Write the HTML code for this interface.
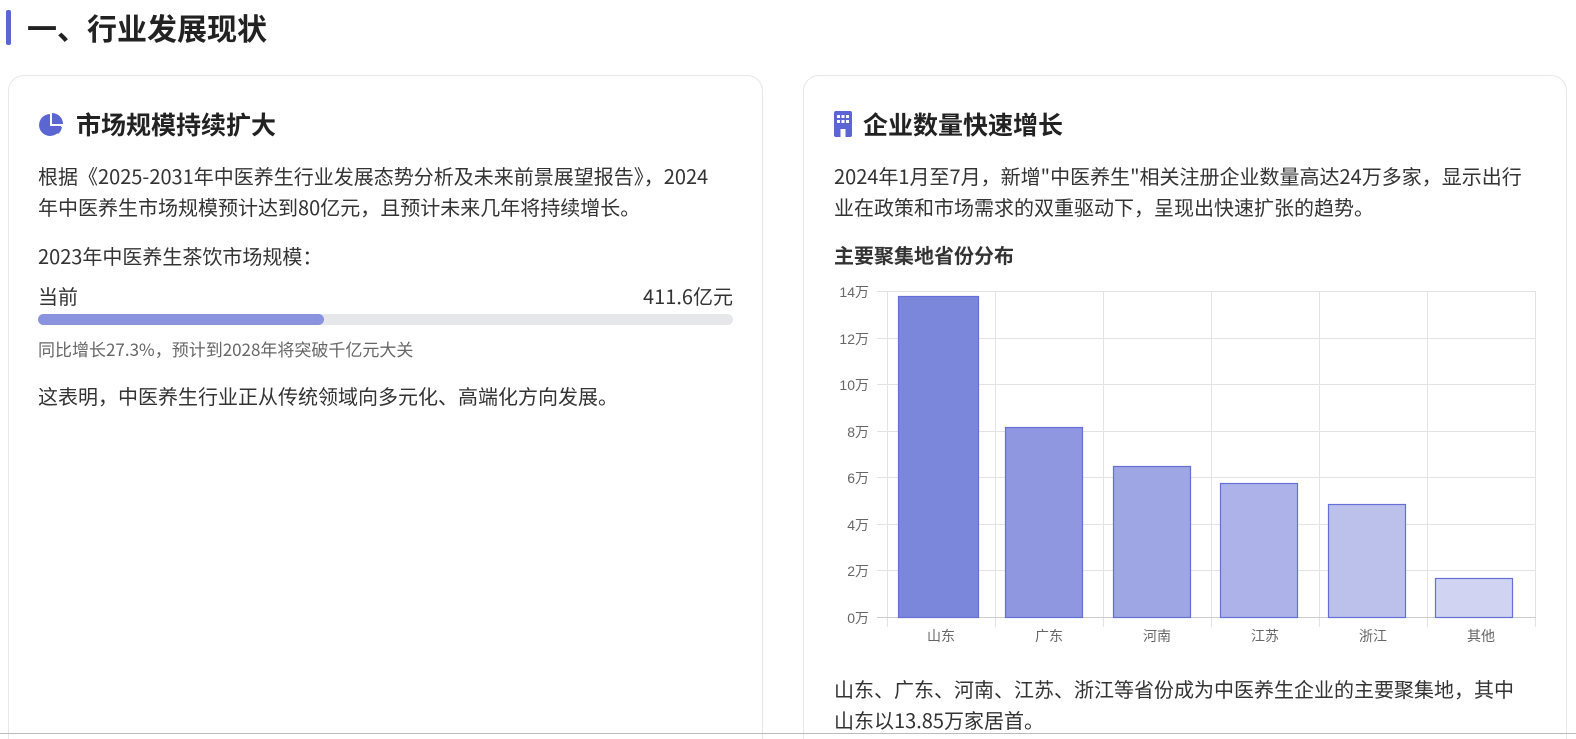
<!DOCTYPE html>
<html><head><meta charset="utf-8"><style>
*{margin:0;padding:0;box-sizing:border-box}
html,body{width:1576px;height:739px;overflow:hidden}
body{background:#fff;font-family:"Noto Sans CJK SC","Liberation Sans",sans-serif;color:#333;position:relative}
.a{position:absolute;white-space:nowrap}
.card{position:absolute;top:75px;height:700px;border:1px solid #e5e7eb;border-radius:16px;background:#fff}
.t{font-size:20px;line-height:31px;color:#333}
.h{font-size:25px;font-weight:bold;color:#222;line-height:32px}
.yl{position:absolute;font-size:14px;color:#666;text-align:right;width:40px;left:829px;font-family:"Liberation Sans","Noto Sans CJK SC",sans-serif}
.xl{position:absolute;font-size:14px;color:#666;text-align:center;width:108px;top:626px}
</style></head><body>
<div class="a" style="left:6px;top:10px;width:5px;height:35px;background:#5b66d3;border-radius:2px"></div>
<div class="a" style="left:27px;top:6px;font-size:30px;font-weight:bold;color:#222;line-height:42px">一、行业发展现状</div>
<div class="card" style="left:8px;width:755px"></div>
<div class="card" style="left:803px;width:764px"></div>
<svg class="a" style="left:38px;top:112px" width="26" height="26" viewBox="0 0 26 26"><path d="M12 2A11 11 0 1 0 23 14H12Z" fill="#5b66d3"/><path d="M14 1A11 11 0 0 1 25 12H14Z" fill="#5b66d3"/><path d="M14 15H24A11 11 0 0 1 20 22Z" fill="#5b66d3"/></svg>
<div class="a h" style="left:76px;top:108px">市场规模持续扩大</div>
<div class="a t" style="left:38px;top:160px">根据《2025-2031年中医养生行业发展态势分析及未来前景展望报告》，2024<br>年中医养生市场规模预计达到80亿元，且预计未来几年将持续增长。</div>
<div class="a t" style="left:38px;top:240px">2023年中医养生茶饮市场规模：</div>
<div class="a t" style="left:38px;top:280px">当前</div>
<div class="a t" style="left:560px;top:280px;width:173px;text-align:right">411.6亿元</div>
<div class="a" style="left:38px;top:314px;width:695px;height:11px;background:#e5e7eb;border-radius:6px"></div>
<div class="a" style="left:38px;top:314px;width:286px;height:11px;background:#8a93de;border-radius:6px"></div>
<div class="a" style="left:38px;top:337px;font-size:17px;color:#666;line-height:24px">同比增长27.3%，预计到2028年将突破千亿元大关</div>
<div class="a t" style="left:38px;top:380px">这表明，中医养生行业正从传统领域向多元化、高端化方向发展。</div>
<svg class="a" style="left:834px;top:111px" width="18" height="26" viewBox="0 0 18 26"><rect x="0" y="0" width="18" height="26" rx="2" fill="#5b66d3"/><g fill="#fff"><rect x="3" y="4" width="3" height="3"/><rect x="7.5" y="4" width="3" height="3"/><rect x="12" y="4" width="3" height="3"/><rect x="3" y="9" width="3" height="3"/><rect x="7.5" y="9" width="3" height="3"/><rect x="12" y="9" width="3" height="3"/><rect x="6.5" y="18" width="5" height="8"/></g></svg>
<div class="a h" style="left:863px;top:108px">企业数量快速增长</div>
<div class="a t" style="left:834px;top:160px">2024年1月至7月，新增"中医养生"相关注册企业数量高达24万多家，显示出行<br>业在政策和市场需求的双重驱动下，呈现出快速扩张的趋势。</div>
<div class="a" style="left:834px;top:240px;font-size:20px;font-weight:bold;color:#333;line-height:30px">主要聚集地省份分布</div>
<svg class="a" style="left:0;top:0" width="1576" height="739">
<g stroke="#e3e3e3" stroke-width="1">
<line x1="877" y1="291.5" x2="1536" y2="291.5"/><line x1="877" y1="338.5" x2="1536" y2="338.5"/><line x1="877" y1="384.5" x2="1536" y2="384.5"/><line x1="877" y1="431.5" x2="1536" y2="431.5"/><line x1="877" y1="477.5" x2="1536" y2="477.5"/><line x1="877" y1="524.5" x2="1536" y2="524.5"/><line x1="877" y1="570.5" x2="1536" y2="570.5"/>
<line x1="887.5" y1="291" x2="887.5" y2="627"/><line x1="995.5" y1="291" x2="995.5" y2="627"/><line x1="1103.5" y1="291" x2="1103.5" y2="627"/><line x1="1211.5" y1="291" x2="1211.5" y2="627"/><line x1="1319.5" y1="291" x2="1319.5" y2="627"/><line x1="1427.5" y1="291" x2="1427.5" y2="627"/><line x1="1535.5" y1="291" x2="1535.5" y2="627"/>
</g>
<line x1="877" y1="617.5" x2="1536" y2="617.5" stroke="#ccc"/>
<g stroke="#6570d6" stroke-width="1.2">
<rect x="898.5" y="296.5" width="80" height="321" fill="#7b87db"/>
<rect x="1005.5" y="427.5" width="77" height="190" fill="#8e97e0"/>
<rect x="1113.5" y="466.5" width="77" height="151" fill="#9ea6e4"/>
<rect x="1220.5" y="483.5" width="77" height="134" fill="#adb3e8"/>
<rect x="1328.5" y="504.5" width="77" height="113" fill="#bcc1ec"/>
<rect x="1435.5" y="578.5" width="77" height="39" fill="#d0d4f2"/>
</g>
<line x1="0" y1="733.5" x2="1576" y2="733.5" stroke="#bbb"/>
</svg>
<div class="yl" style="top:282px">14万</div><div class="yl" style="top:329px">12万</div><div class="yl" style="top:375px">10万</div><div class="yl" style="top:422px">8万</div><div class="yl" style="top:468px">6万</div><div class="yl" style="top:515px">4万</div><div class="yl" style="top:561px">2万</div><div class="yl" style="top:608px">0万</div>
<div class="xl" style="left:887px">山东</div><div class="xl" style="left:995px">广东</div><div class="xl" style="left:1103px">河南</div><div class="xl" style="left:1211px">江苏</div><div class="xl" style="left:1319px">浙江</div><div class="xl" style="left:1427px">其他</div>
<div class="a t" style="left:834px;top:673px">山东、广东、河南、江苏、浙江等省份成为中医养生企业的主要聚集地，其中<br>山东以13.85万家居首。</div>
</body></html>
